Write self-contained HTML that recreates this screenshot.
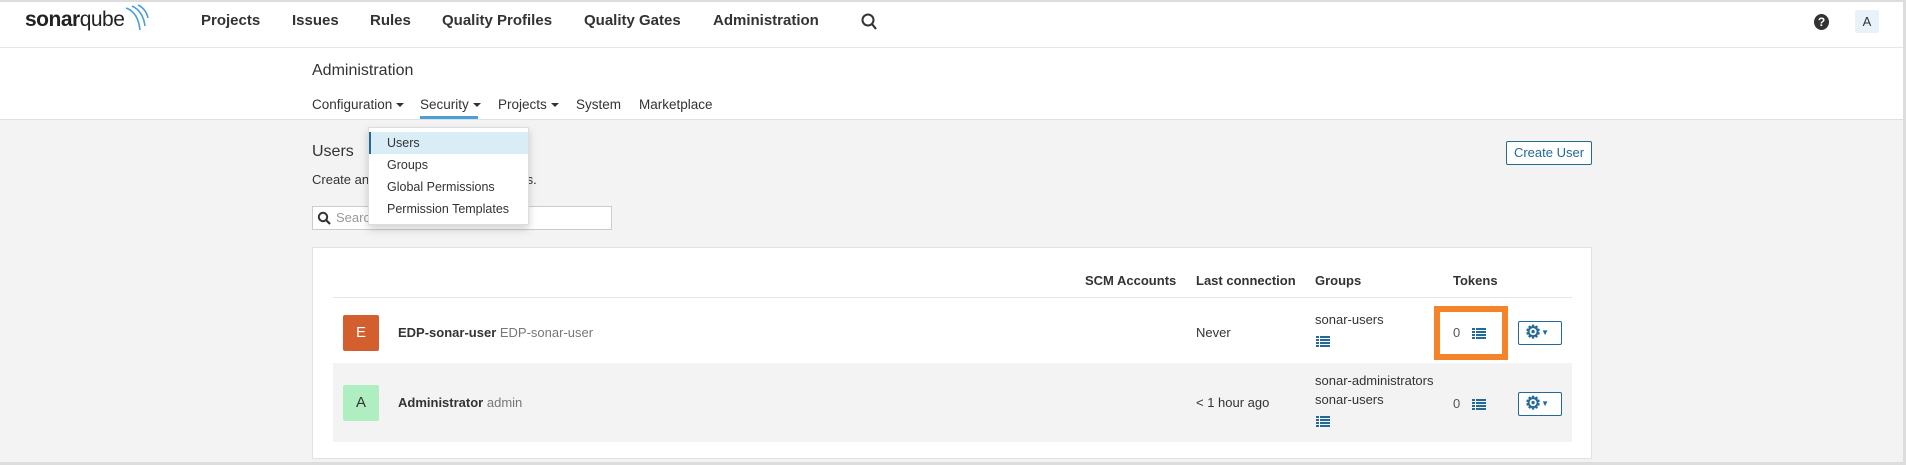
<!DOCTYPE html>
<html><head><meta charset="utf-8"><style>
*{box-sizing:border-box;margin:0;padding:0}
body{width:1906px;height:465px;overflow:hidden;background:#f3f3f3;font-family:"Liberation Sans",Arial,sans-serif;color:#333;position:relative;font-size:13px}
.abs{position:absolute;white-space:nowrap}
.top{position:absolute;left:0;top:0;width:1906px;height:48px;background:#fff;border-bottom:1px solid #e6e6e6;border-top:2px solid #ddd}
.nav{font-size:15px;font-weight:bold;color:#333;top:12px}
.sub{position:absolute;left:0;top:48px;width:1906px;height:72px;background:#fff;border-bottom:1px solid #e0e0e0}
.sn{font-size:13.5px;color:#333;top:97px}
.car{display:inline-block;width:0;height:0;border-left:4px solid transparent;border-right:4px solid transparent;border-top:4px solid #333;vertical-align:middle;margin-left:4px}
.dd{position:absolute;left:368px;top:127px;width:161px;height:98px;background:#fff;border:1px solid #ddd;box-shadow:0 4px 8px rgba(0,0,0,.18)}
.dd div{height:22px;line-height:22px;padding-left:18px;font-size:12.5px;color:#333}
.card{position:absolute;left:312px;top:247px;width:1280px;height:212px;background:#fff;border:1px solid #e2e2e2}
.th{font-size:13px;font-weight:bold;top:273px}
.lst{display:inline-block;width:14px;height:11px;background:repeating-linear-gradient(#236a97 0 2px,transparent 2px 3px);position:absolute}
.lst:before{content:"";position:absolute;left:3px;top:0;width:1px;height:11px;background:#fff}
.gb{position:absolute;width:44px;height:24px;border:1px solid #236a97;border-radius:2px;background:#fff;color:#236a97;font-size:18px;font-weight:bold;line-height:21px;padding-left:6px}
</style></head><body>
<div class="top"></div>
<div class="abs" style="left:25px;top:8px;font-size:21px;color:#222;letter-spacing:-0.5px"><b>sonar</b>qube</div>
<svg class="abs" style="left:124px;top:4px" width="26" height="30"><g fill="none" stroke="#4b9fd5" stroke-width="1.6"><path d="M2 4 Q14 8 16 26"/><path d="M8 2 Q19 7 21 22"/><path d="M14 1 Q22 5 24 14"/></g></svg>
<div class="abs nav" style="left:201px">Projects</div>
<div class="abs nav" style="left:292px">Issues</div>
<div class="abs nav" style="left:370px">Rules</div>
<div class="abs nav" style="left:442px">Quality Profiles</div>
<div class="abs nav" style="left:584px">Quality Gates</div>
<div class="abs nav" style="left:713px">Administration</div>
<svg class="abs" style="left:861px;top:13px" width="16" height="18"><circle cx="7" cy="7" r="5.5" fill="none" stroke="#333" stroke-width="2"/><path d="M11 11 L15 16" stroke="#333" stroke-width="2.2"/></svg>
<div class="abs" style="left:1814px;top:14px;width:15px;height:16px;border-radius:50%;background:#333;color:#fff;font-size:12px;font-weight:bold;text-align:center;line-height:16px">?</div>
<div class="abs" style="left:1855px;top:10px;width:24px;height:23px;background:#e8f2fa;border-radius:2px;text-align:center;line-height:23px;font-size:13px;color:#333">A</div>
<div class="sub"></div>
<div class="abs" style="left:312px;top:62px;font-size:16px;color:#333">Administration</div>
<div class="abs sn" style="left:312px">Configuration<span class="car"></span></div>
<div class="abs sn" style="left:420px">Security<span class="car"></span></div>
<div class="abs" style="left:420px;top:116px;width:58px;height:3px;background:#4b9fd5"></div>
<div class="abs sn" style="left:498px">Projects<span class="car"></span></div>
<div class="abs sn" style="left:576px">System</div>
<div class="abs sn" style="left:639px">Marketplace</div>
<div class="abs" style="left:312px;top:143px;font-size:16px">Users</div>
<div class="abs" style="left:312px;top:172px;font-size:13px">Create and administer individual users.</div>
<div class="abs" style="left:312px;top:206px;width:300px;height:24px;background:#fff;border:1px solid #ccc"></div>
<svg class="abs" style="left:317px;top:211px" width="14" height="14"><circle cx="6" cy="6" r="4.2" fill="none" stroke="#333" stroke-width="2"/><path d="M9 9 L13 13" stroke="#333" stroke-width="2.2"/></svg>
<div class="abs" style="left:336px;top:210px;font-size:13px;color:#999">Search by login or name...</div>
<div class="dd"><div style="margin-top:4px;background:#d9edf7;border-left:2px solid #236a97;padding-left:16px">Users</div><div>Groups</div><div>Global Permissions</div><div>Permission Templates</div></div>
<div class="abs" style="left:1506px;top:141px;width:86px;height:24px;border:1px solid #236a97;border-radius:2px;background:#fff;color:#236a97;font-size:13px;text-align:center;line-height:22px">Create User</div>
<div class="card"></div>
<div class="abs th" style="left:1085px">SCM Accounts</div>
<div class="abs th" style="left:1196px">Last connection</div>
<div class="abs th" style="left:1315px">Groups</div>
<div class="abs th" style="left:1453px">Tokens</div>
<div class="abs" style="left:333px;top:297px;width:1239px;height:1px;background:#e6e6e6"></div>
<div class="abs" style="left:333px;top:363px;width:1239px;height:79px;background:#f3f3f3"></div>
<div class="abs" style="left:343px;top:315px;width:36px;height:36px;background:#d35f2e;border-radius:2px;color:#fff;font-size:15px;text-align:center;line-height:36px">E</div>
<div class="abs" style="left:398px;top:325px;font-size:13px"><b>EDP-sonar-user</b> <span style="color:#777">EDP-sonar-user</span></div>
<div class="abs" style="left:1196px;top:325px">Never</div>
<div class="abs" style="left:1315px;top:312px">sonar-users</div>
<span class="lst" style="left:1316px;top:336px"></span>
<div class="abs" style="left:1434px;top:306px;width:74px;height:54px;border:6px solid #f5832a"></div>
<div class="abs" style="left:1453px;top:325px;color:#555">0</div>
<span class="lst" style="left:1472px;top:328px"></span>
<div class="gb" style="left:1518px;top:321px">⚙<span style="font-size:8px;vertical-align:3px">▼</span></div>
<div class="abs" style="left:343px;top:385px;width:36px;height:36px;background:#aeeec0;border-radius:2px;color:#333;font-size:15px;text-align:center;line-height:36px">A</div>
<div class="abs" style="left:398px;top:395px;font-size:13px"><b>Administrator</b> <span style="color:#777">admin</span></div>
<div class="abs" style="left:1196px;top:395px">&lt; 1 hour ago</div>
<div class="abs" style="left:1315px;top:373px">sonar-administrators</div>
<div class="abs" style="left:1315px;top:392px">sonar-users</div>
<span class="lst" style="left:1316px;top:416px"></span>
<div class="abs" style="left:1453px;top:396px;color:#555">0</div>
<span class="lst" style="left:1472px;top:399px"></span>
<div class="gb" style="left:1518px;top:392px">⚙<span style="font-size:8px;vertical-align:3px">▼</span></div>
<div class="abs" style="left:1903px;top:0;width:3px;height:465px;background:#ddd"></div>
<div class="abs" style="left:0;top:462px;width:1906px;height:3px;background:#ddd"></div>
</body></html>
